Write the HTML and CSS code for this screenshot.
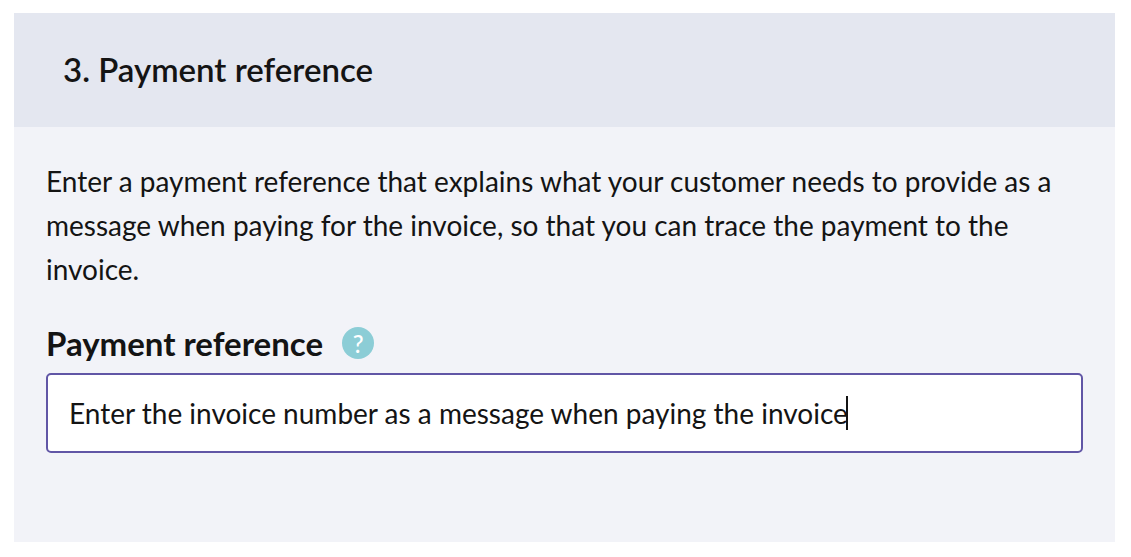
FILE: index.html
```html
<!DOCTYPE html>
<html lang="en">
<head>
<meta charset="utf-8">
<title>Payment reference</title>
<link rel="stylesheet" href="styles.css">
</head>
<body>
<section class="panel">
  <header class="panel-header">
    <h2 class="panel-title">3. Payment reference</h2>
  </header>
  <div class="panel-body">
    <p class="intro">Enter a payment reference that explains what your customer needs to provide as a message when paying for the invoice, so that you can trace the payment to the invoice.</p>
    <div class="label-row">
      <label class="label" for="reference">Payment reference</label>
      <button class="help" type="button" aria-label="Help">?</button>
    </div>
    <div class="field">
      <input class="field-input" id="reference" type="text" value="Enter the invoice number as a message when paying the invoice">
      <span class="caret"></span>
    </div>
  </div>
</section>
</body>
</html>
```

FILE: styles.css
```css
* {
  box-sizing: border-box;
}

body {
  margin: 0;
  padding: 13px 16px 15px 14px;
  min-height: 100vh;
  display: flex;
  background: #fff;
  color: #141414;
  font-family: Lato, sans-serif;
}

.panel {
  flex: 1;
  min-width: 0;
  background: #f2f3f8;
}

.panel-header {
  padding: 36px 49px 38px;
  background: #e4e7f0;
}

.panel-title {
  margin: 0;
  font-size: 33px;
  line-height: 40px;
  font-weight: 600;
}

.panel-body {
  padding: 32px;
}

.intro {
  margin: 0 0 36px;
  font-size: 28px;
  line-height: 44px;
}

.label-row {
  display: flex;
  align-items: center;
  gap: 19px;
  margin-bottom: 14px;
}

.label {
  font-size: 33px;
  line-height: 32px;
  font-weight: 700;
}

.help {
  width: 32px;
  height: 32px;
  padding: 2px 0 0;
  border: 0;
  border-radius: 50%;
  background: #8ccdd6;
  color: #fff;
  font: 500 24px/30px Lato, sans-serif;
}

.field {
  display: flex;
  align-items: center;
  height: 80px;
  padding: 0 21px;
  border: 2px solid #6156a6;
  border-radius: 5px;
  background: #fff;
}

.field-input {
  field-sizing: content;
  min-width: 0;
  padding: 0;
  border: 0;
  outline: 0;
  background: transparent;
  color: inherit;
  caret-color: transparent;
  font: 28px/40px Lato, sans-serif;
}

.caret {
  flex: none;
  width: 2px;
  height: 34px;
  margin-left: -2px;
  background: #141414;
}
```
